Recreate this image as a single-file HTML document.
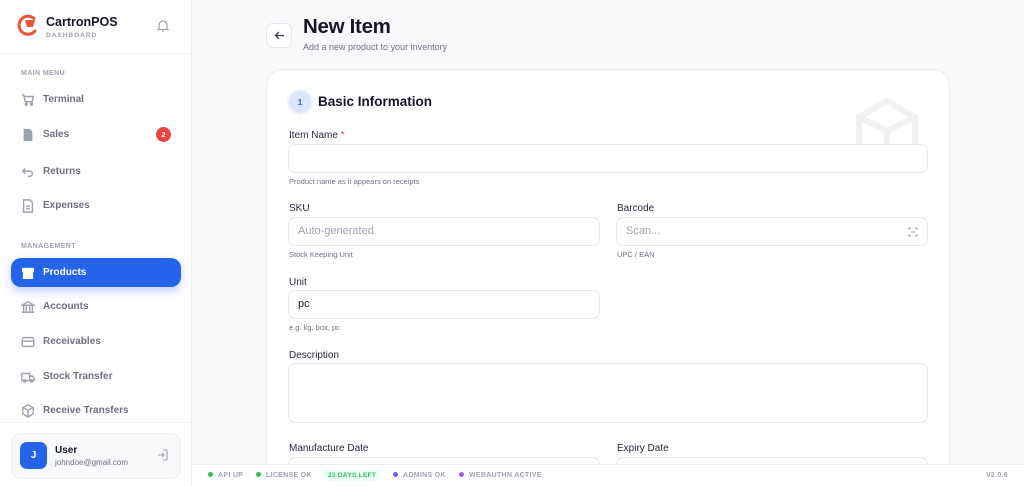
<!DOCTYPE html>
<html><head><meta charset="utf-8"><style>
*{box-sizing:border-box;margin:0;padding:0}
html,body{width:1024px;height:486px;overflow:hidden}
body{font-family:"Liberation Sans",sans-serif;background:#f8f9fb;position:relative;color:#111827}
.sb{position:absolute;left:0;top:0;width:192px;height:486px;background:#fff;border-right:1px solid #eceef2}
.logo{position:absolute;left:17px;top:14px}
.brand{position:absolute;left:46px;top:15px;font-weight:bold;font-size:12.5px;color:#111827}
.sub{position:absolute;left:46px;top:32px;font-size:6.5px;font-weight:bold;letter-spacing:1px;color:#9ca3af}
.hdiv{position:absolute;left:0;top:53px;width:191px;border-top:1px solid #f1f2f5}
.sec{position:absolute;left:21px;font-size:7px;font-weight:bold;color:#9ca3af;letter-spacing:.4px}
.it{position:absolute;left:11px;width:170px;height:29px;display:flex;align-items:center;padding-left:10px;font-size:10px;font-weight:bold;color:#6b7280}
.it svg{width:14px;height:14px;margin-right:8px;stroke:#9ca3af;fill:none;stroke-width:1.6}
.it.act{background:#2563eb;color:#fff;border-radius:10px;box-shadow:0 4px 10px rgba(37,99,235,.3)}
.it.act svg{stroke:#fff;fill:#fff}
.badge{position:absolute;right:10px;top:7px;width:15px;height:15px;border-radius:50%;background:#ef4444;color:#fff;font-size:7.5px;text-align:center;line-height:15px}
.user{position:absolute;left:11px;top:433px;width:170px;height:46px;border-radius:10px;background:#f8f9fb;border:1px solid #eef0f3}
.av{position:absolute;left:8px;top:8px;width:27px;height:27px;border-radius:7px;background:#2563eb;color:#fff;font-weight:bold;font-size:10px;text-align:center;line-height:27px}
.back{position:absolute;left:266px;top:23px;width:26px;height:25px;border-radius:7px;background:#fff;border:1px solid #e5e7eb}
h1{position:absolute;left:303px;top:15px;font-size:20.5px;font-weight:900;color:#111827;letter-spacing:-.3px}
.desc{position:absolute;left:303px;top:42px;font-size:9px;color:#6b7280}
.card{position:absolute;left:266px;top:69px;width:684px;height:420px;background:#fff;border:1px solid #e9ebef;border-radius:17px}
.num{position:absolute;left:289px;top:91px;width:22px;height:22px;border-radius:50%;background:#dbe7fe;box-shadow:0 0 0 2px #eef3fe;color:#2563eb;font-size:8.5px;font-weight:bold;text-align:center;line-height:22px}
.ct{position:absolute;left:318px;top:94px;font-size:13.5px;font-weight:bold}
.lb{position:absolute;font-size:10px;color:#1f2937}
.inp{position:absolute;height:29px;border:1px solid #e5e7eb;border-radius:7px;background:#fff;font-size:11px;padding-left:9px;line-height:27px;color:#9ca3af}
.hint{position:absolute;font-size:7.5px;color:#6b7280}
.foot{position:absolute;left:192px;top:464px;width:832px;height:22px;background:#fff;border-top:1px solid #eceef2;font-size:7px;font-weight:bold;color:#9ca3af;letter-spacing:.3px}
.foot span{position:absolute;top:7px}
.dot{display:inline-block;width:5px;height:5px;border-radius:50%;margin-right:5px;vertical-align:0}
</style></head><body>
<div class="sb">
<svg class="logo" width="22" height="22" viewBox="0 0 22 22"><path d="M17 4.5A9 9 0 1 0 18 17" stroke="#f0533a" stroke-width="3" fill="none" stroke-linecap="round"/><path d="M8 6h10l-2 7H10z" fill="#f0533a"/></svg>
<div class="brand">CartronPOS</div><div class="sub">DASHBOARD</div>
<svg style="position:absolute;left:157px;top:19px" width="12" height="13" viewBox="0 0 12 13" fill="none" stroke="#9ca3af" stroke-width="1.2"><path d="M2 9.5V6a4 4 0 0 1 8 0v3.5l1 1H1z"/><path d="M5 12h2"/></svg>
<div class="hdiv"></div>
<div class="sec" style="top:70px">MAIN MENU</div>
<div class="it" style="top:85px"><svg viewBox="0 0 16 16"><path d="M1 2h2l2 8h8l1-6H4"/><circle cx="6" cy="13" r="1"/><circle cx="12" cy="13" r="1"/></svg>Terminal</div>
<div class="it" style="top:120px"><svg viewBox="0 0 16 16" style="fill:#9ca3af;stroke:none"><path d="M3 1h7l3 3v11H3z"/></svg>Sales<div class="badge">2</div></div>
<div class="it" style="top:157px"><svg viewBox="0 0 16 16"><path d="M5 4L2 7l3 3M2 7h8a3 3 0 0 1 0 6H8"/></svg>Returns</div>
<div class="it" style="top:191px"><svg viewBox="0 0 16 16"><path d="M3 1h7l3 3v11H3zM6 8h4M6 11h4"/></svg>Expenses</div>
<div class="sec" style="top:243px">MANAGEMENT</div>
<div class="it act" style="top:258px"><svg viewBox="0 0 16 16"><path d="M2 3h12v3H2zM3 6h10v8H3z"/></svg>Products</div>
<div class="it" style="top:292px"><svg viewBox="0 0 16 16"><path d="M1 6l7-4 7 4zM3 7v6M6 7v6M10 7v6M13 7v6M1 14h14"/></svg>Accounts</div>
<div class="it" style="top:327px"><svg viewBox="0 0 16 16"><rect x="1.5" y="3" width="13" height="10" rx="2"/><path d="M1.5 7h13"/></svg>Receivables</div>
<div class="it" style="top:362px"><svg viewBox="0 0 16 16"><path d="M1 4h9v8H1zM10 7h3l2 2v3h-5"/><circle cx="4" cy="12.5" r="1.3"/><circle cx="12" cy="12.5" r="1.3"/></svg>Stock Transfer</div>
<div class="it" style="top:396px"><svg viewBox="0 0 16 16"><path d="M8 1l6 3v7l-6 4-6-4V4zM2 4l6 3 6-3M8 7v8"/></svg>Receive Transfers</div>
<div style="position:absolute;left:0;top:422px;width:191px;border-top:1px solid #f1f2f5"></div>
<div class="user"><div class="av">J</div>
<div style="position:absolute;left:43px;top:11px;font-size:10px;font-weight:bold">User</div>
<div style="position:absolute;left:43px;top:24px;font-size:8px;color:#6b7280">johndoe@gmail.com</div>
<svg style="position:absolute;left:145px;top:15px" width="12" height="12" viewBox="0 0 12 12" fill="none" stroke="#9ca3af" stroke-width="1.1"><path d="M6 1h4v10H6M1 6h6M5 4l2 2-2 2"/></svg></div>
</div>
<div class="back"><svg style="position:absolute;left:7px;top:6px" width="11" height="11" viewBox="0 0 11 11" fill="none" stroke="#374151" stroke-width="1.3"><path d="M10 5.5H1.5M5 2L1.5 5.5 5 9"/></svg></div>
<h1>New Item</h1><div class="desc">Add a new product to your inventory</div>
<div class="card"></div>
<svg style="position:absolute;left:856px;top:97px" width="62" height="50" viewBox="0 0 62 50" fill="none" stroke="#f0f1f3" stroke-width="6"><path d="M3 50V20L31 4l28 16v30M3 20l28 14 28-14M31 34v16"/></svg>
<div class="num">1</div><div class="ct">Basic Information</div>
<div class="lb" style="left:289px;top:130px">Item Name <span style="color:#ef4444">*</span></div>
<div class="inp" style="left:288px;top:144px;width:640px"></div>
<div class="hint" style="left:289px;top:177px">Product name as it appears on receipts</div>
<div class="lb" style="left:289px;top:203px">SKU</div>
<div class="inp" style="left:288px;top:217px;width:312px">Auto-generated</div>
<div class="hint" style="left:289px;top:250px">Stock Keeping Unit</div>
<div class="lb" style="left:617px;top:203px">Barcode</div>
<div class="inp" style="left:616px;top:217px;width:312px">Scan...<svg style="position:absolute;right:9px;top:9px" width="10" height="10" viewBox="0 0 10 10" fill="none" stroke="#9ca3af" stroke-width="1"><path d="M1 3V1h2M7 1h2v2M9 7v2H7M3 9H1V7M3 5h4"/></svg></div>
<div class="hint" style="left:617px;top:250px">UPC / EAN</div>
<div class="lb" style="left:289px;top:277px">Unit</div>
<div class="inp" style="left:288px;top:290px;width:312px;color:#111827">pc</div>
<div class="hint" style="left:289px;top:323px">e.g. kg, box, pc</div>
<div class="lb" style="left:289px;top:350px">Description</div>
<div class="inp" style="left:288px;top:363px;width:640px;height:60px"></div>
<div class="lb" style="left:289px;top:443px">Manufacture Date</div>
<div class="lb" style="left:617px;top:443px">Expiry Date</div>
<div class="inp" style="left:288px;top:457px;width:312px"></div>
<div class="inp" style="left:616px;top:457px;width:312px"></div>
<div class="foot">
<span style="left:16px"><i class="dot" style="background:#22c55e"></i>API UP</span>
<span style="left:64px"><i class="dot" style="background:#22c55e"></i>LICENSE OK</span>
<span style="left:131px;top:5px;background:#ecfdf3;color:#22c55e;padding:2px 5px;border-radius:4px;font-size:6.5px">23 DAYS LEFT</span>
<span style="left:201px"><i class="dot" style="background:#6366f1"></i>ADMINS OK</span>
<span style="left:267px"><i class="dot" style="background:#a855f7"></i>WEBAUTHN ACTIVE</span>
<span style="right:16px">V2.0.6</span>
</div>
</body></html>
